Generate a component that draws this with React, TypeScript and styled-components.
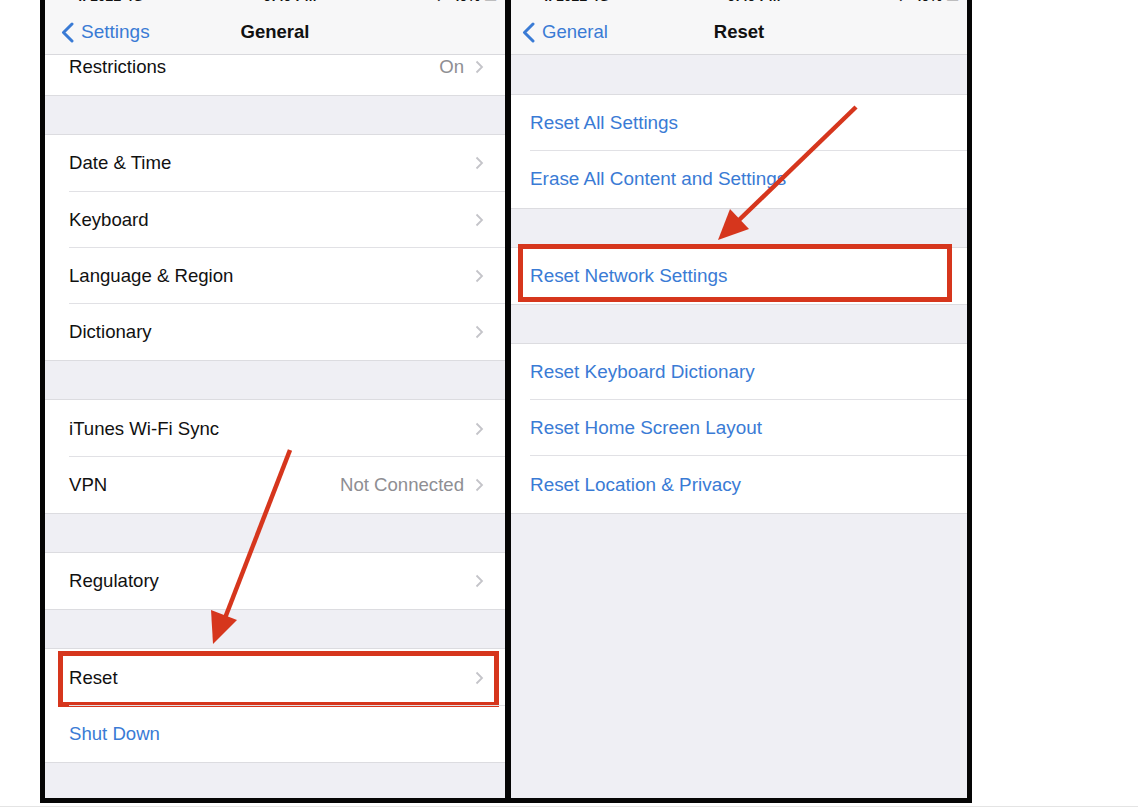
import React from 'react';
import styled, { createGlobalStyle } from 'styled-components';

const GlobalStyle = createGlobalStyle`
  html, body {
    margin: 0;
    padding: 0;
    background: #fff;
    overflow: hidden;
  }
  body {
    font-family: 'Liberation Sans', Arial, sans-serif;
  }
`;

const BLUE = '#3a7bd5';
const RED = '#d6361d';

const Page = styled.div`
  position: relative;
  width: 1138px;
  height: 808px;
  padding-left: 40px;
  box-sizing: border-box;
`;

const Frame = styled.div`
  display: flex;
  width: 932px;
  height: 803px;
  box-sizing: border-box;
  border: 5px solid #050505;
  border-top: none;
  background: #050505;
`;

const Screen = styled.div<{ $width: number; $gap?: number }>`
  display: flex;
  flex-direction: column;
  width: ${(p) => p.$width}px;
  margin-right: ${(p) => p.$gap || 0}px;
  height: 798px;
  background: #efeff4;
  overflow: hidden;
`;

const StatusBar = styled.div`
  display: flex;
  justify-content: space-between;
  align-items: flex-end;
  height: 10px;
  padding: 0 8px;
  background: #f7f7f8;
  overflow: hidden;
  font-size: 14px;
  font-weight: 700;
  color: #111;
  line-height: 14px;
  > span {
    margin-bottom: 7px;
  }
`;

const NavBar = styled.div`
  position: relative;
  display: flex;
  align-items: center;
  height: 44px;
  background: #f7f7f8;
  border-bottom: 1px solid #d9d9dd;
  flex-shrink: 0;
`;

const Back = styled.div<{ $size: number; $inset: number }>`
  display: flex;
  align-items: center;
  gap: 7px;
  padding-left: ${(p) => p.$inset}px;
  color: ${BLUE};
  font-size: ${(p) => p.$size}px;
`;

const Title = styled.div<{ $size: number }>`
  position: absolute;
  left: 0;
  right: 0;
  text-align: center;
  font-size: ${(p) => p.$size}px;
  font-weight: 700;
  color: #111;
  pointer-events: none;
`;

const Body = styled.div<{ $offset?: number; $lead?: number }>`
  flex: 1;
  overflow: hidden;
  > div {
    margin-top: ${(p) => -(p.$offset || 0)}px;
    padding-top: ${(p) => p.$lead || 0}px;
  }
`;

const Group = styled.div<{ $open?: boolean }>`
  background: #fff;
  border-top: ${(p) => (p.$open ? 'none' : '1px solid #dcdce0')};
  border-bottom: 1px solid #dcdce0;
  margin-bottom: 38px;
`;

const Row = styled.div<{ $inset: number; $size: number }>`
  position: relative;
  display: flex;
  align-items: center;
  height: 56.3px;
  box-sizing: border-box;
  padding-left: ${(p) => p.$inset}px;
  padding-right: 21px;
  font-size: ${(p) => p.$size}px;
  &::after {
    content: '';
    position: absolute;
    left: ${(p) => p.$inset}px;
    right: 0;
    bottom: 0;
    height: 1px;
    background: #e1e1e5;
  }
  &:last-child::after {
    display: none;
  }
`;

const Label = styled.span<{ $blue?: boolean }>`
  flex: 1;
  color: ${(p) => (p.$blue ? BLUE : '#111')};
`;

const Value = styled.span`
  color: #8e8e93;
  margin-right: 11px;
`;

const Highlight = styled.div<{ $t: number; $l: number; $r: number; $b: number }>`
  position: absolute;
  top: ${(p) => p.$t}px;
  left: ${(p) => p.$l}px;
  right: ${(p) => p.$r}px;
  bottom: ${(p) => p.$b}px;
  border: 5px solid ${RED};
  pointer-events: none;
`;

const Annotations = styled.svg`
  position: absolute;
  left: 0;
  top: 0;
  pointer-events: none;
`;

const BottomRule = styled.div`
  height: 1px;
  margin-top: 3px;
  background: #e4e4e4;
  margin-left: -40px;
`;

const Chevron = () => (
  <svg width="9" height="14" viewBox="0 0 9 14">
    <polyline points="1.5,1.5 7,7 1.5,12.5" fill="none" stroke="#c4c4c9" strokeWidth="1.8" />
  </svg>
);

const BackChevron = () => (
  <svg width="13" height="21" viewBox="0 0 13 21">
    <polyline points="11,2 2.5,10.5 11,19" fill="none" stroke={BLUE} strokeWidth="3" strokeLinecap="round" strokeLinejoin="round" />
  </svg>
);

type Item = { label: string; value?: string; chevron?: boolean; blue?: boolean; mark?: boolean };

const general: Item[][] = [
  [{ label: 'Restrictions', value: 'On', chevron: true }],
  [
    { label: 'Date & Time', chevron: true },
    { label: 'Keyboard', chevron: true },
    { label: 'Language & Region', chevron: true },
    { label: 'Dictionary', chevron: true },
  ],
  [
    { label: 'iTunes Wi-Fi Sync', chevron: true },
    { label: 'VPN', value: 'Not Connected', chevron: true },
  ],
  [{ label: 'Regulatory', chevron: true }],
  [
    { label: 'Reset', chevron: true, mark: true },
    { label: 'Shut Down', blue: true },
  ],
];

const reset: Item[][] = [
  [
    { label: 'Reset All Settings', blue: true },
    { label: 'Erase All Content and Settings', blue: true },
  ],
  [{ label: 'Reset Network Settings', blue: true, mark: true }],
  [
    { label: 'Reset Keyboard Dictionary', blue: true },
    { label: 'Reset Home Screen Layout', blue: true },
    { label: 'Reset Location & Privacy', blue: true },
  ],
];

const Status = () => (
  <StatusBar>
    <span>●●●ll 1022 4G</span>
    <span>9:49 PM</span>
    <span>➚ 49% ▭</span>
  </StatusBar>
);

const App = () => {
  return (
    <Page>
      <GlobalStyle />
      <Frame>
        <Screen $width={460} $gap={6}>
          <Status />
          <NavBar>
            <Back $size={19} $inset={16}>
              <BackChevron />
              Settings
            </Back>
            <Title $size={18.5}>General</Title>
          </NavBar>
          <Body $offset={16}>
            <div>
              {general.map((group, gi) => (
                <Group key={gi} $open={gi === 0}>
                  {group.map((item) => (
                    <Row key={item.label} $inset={24} $size={18.6}>
                      <Label $blue={item.blue}>{item.label}</Label>
                      {item.value && <Value>{item.value}</Value>}
                      {item.chevron && <Chevron />}
                      {item.mark && <Highlight $t={2} $l={13} $r={6} $b={-1} />}
                    </Row>
                  ))}
                </Group>
              ))}
            </div>
          </Body>
        </Screen>
        <Screen $width={456}>
          <Status />
          <NavBar>
            <Back $size={18.5} $inset={11}>
              <BackChevron />
              General
            </Back>
            <Title $size={18.5}>Reset</Title>
          </NavBar>
          <Body $lead={39}>
            <div>
              {reset.map((group, gi) => (
                <Group key={gi}>
                  {group.map((item) => (
                    <Row key={item.label} $inset={19} $size={18.9}>
                      <Label $blue={item.blue}>{item.label}</Label>
                      {item.mark && <Highlight $t={-4} $l={7} $r={15} $b={2} />}
                    </Row>
                  ))}
                </Group>
              ))}
            </div>
          </Body>
        </Screen>
      </Frame>
      <BottomRule />
      <Annotations width={1138} height={808} viewBox="0 0 1138 808">
        <line x1="290" y1="450" x2="225" y2="618" stroke={RED} strokeWidth="4.5" />
        <polygon points="213,644 211,610 237,620" fill={RED} />
        <line x1="856" y1="107" x2="738" y2="221" stroke={RED} strokeWidth="4.5" />
        <polygon points="718,240 730,209 749,229" fill={RED} />
      </Annotations>
    </Page>
  );
};

export default App;
